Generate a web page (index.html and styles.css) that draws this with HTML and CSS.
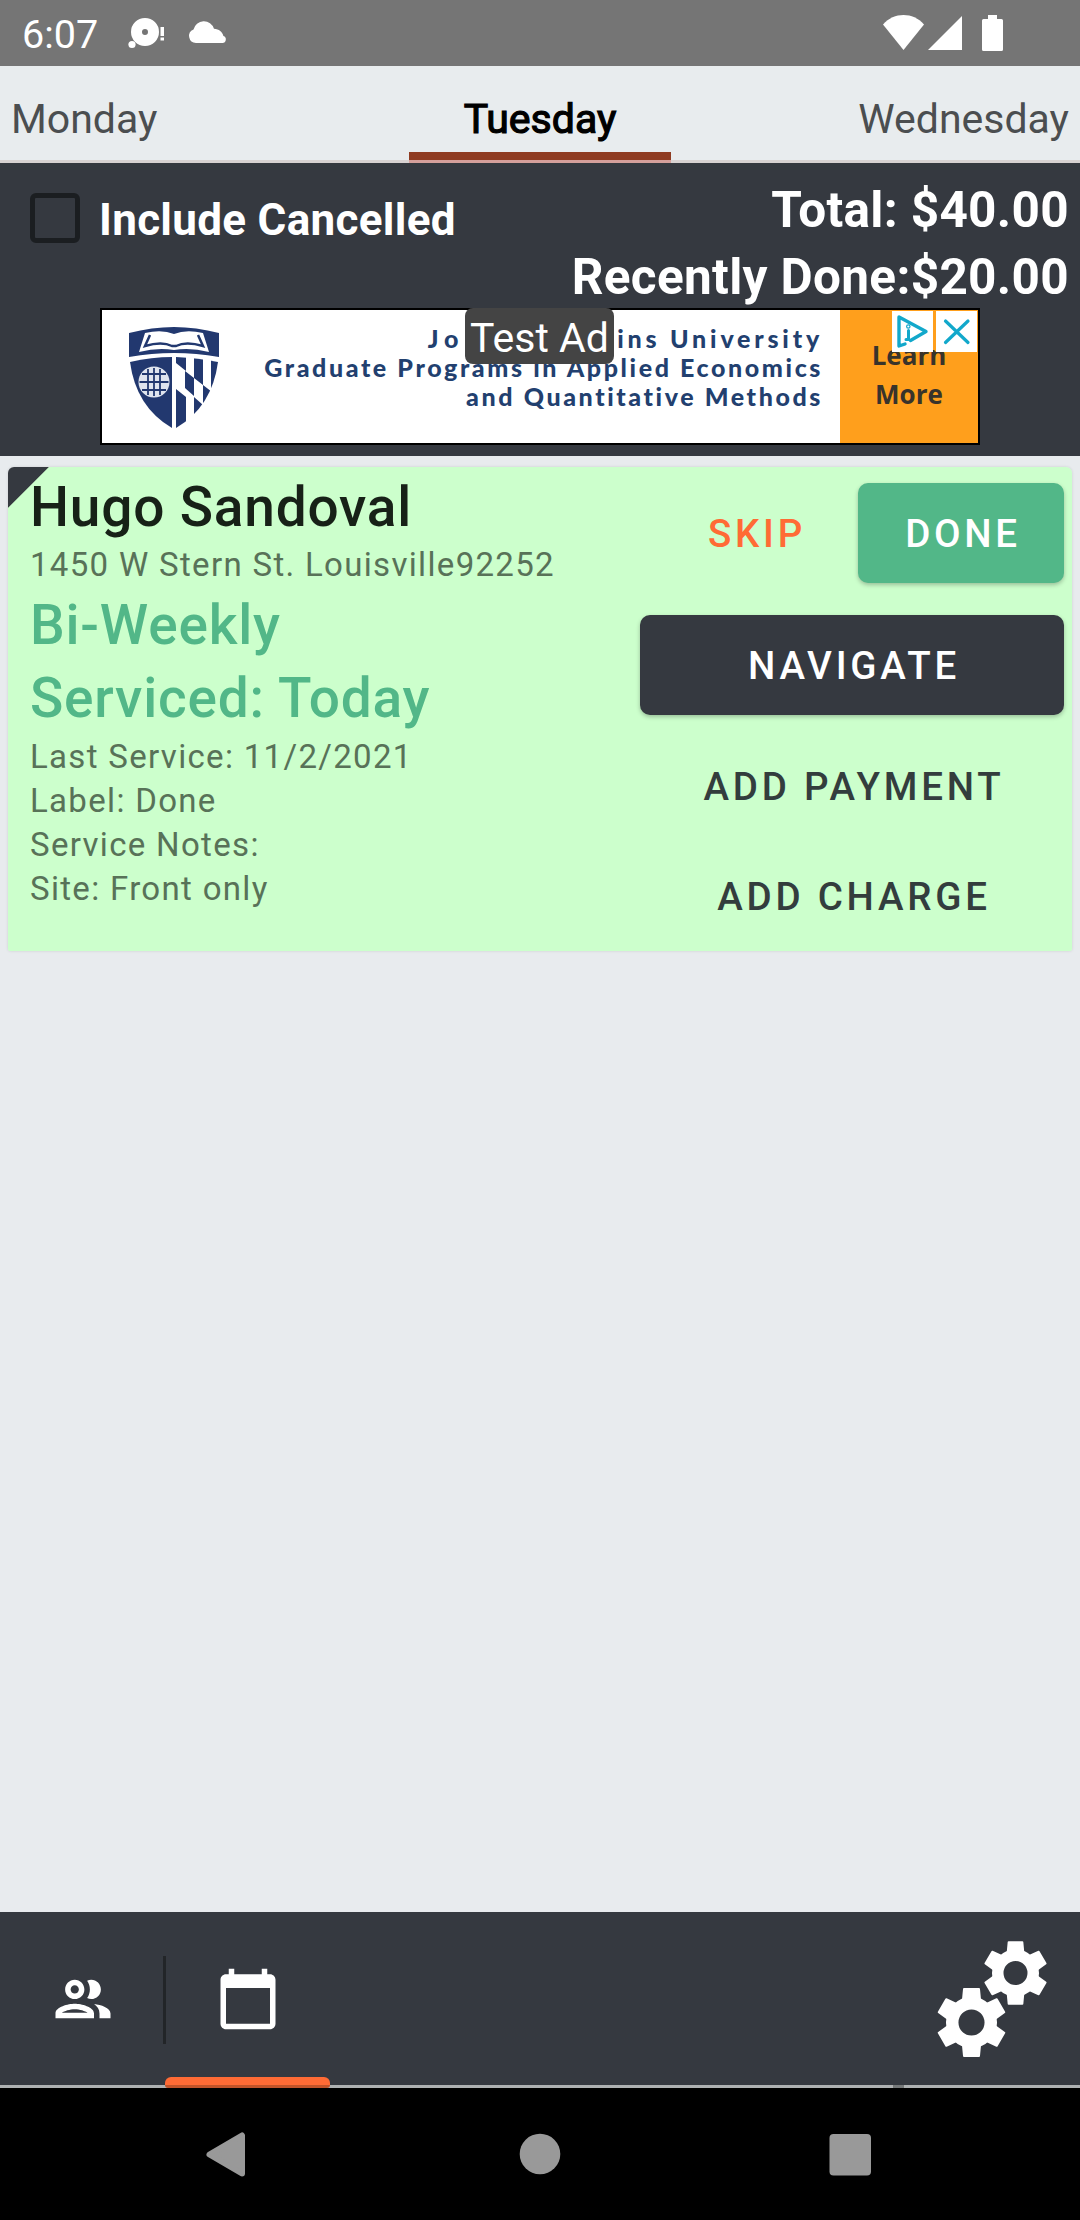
FILE: index.html
```html
<!DOCTYPE html>
<html lang="en">
<head>
<meta charset="utf-8">
<title>Schedule</title>
<link rel="stylesheet" href="styles.css">
</head>
<body>
<div class="screen">
  <header class="status">
    <span class="clock">6:07</span>
    <svg class="status-left" width="100" height="66" viewBox="128 0 100 66" fill="#fff">
      <path fill-rule="evenodd" d="M145 18a14 14 0 1 1 0 28a14 14 0 1 1 0-28zm0 11a3 3 0 1 0 0 6a3 3 0 1 0 0-6z"/>
      <circle cx="132" cy="44.5" r="3.6"/>
      <path d="M160.500 27h3.500v9h-3.500zM160.500 37.500h3.500v3h-3.500z"/>
      <path d="M196 43a7 7 0 0 1-2.500-13.500a10.600 10.600 0 0 1 20.500-.8c5 .3 8.500 3 9.400 7.300a3.600 3.600 0 0 1-1 7z"/>
    </svg>
    <svg class="status-right" width="124" height="66" viewBox="882 0 124 66" fill="#fff">
      <path d="M903.500 50L883 24.500c11-12.600 30-12.600 41 0z"/>
      <path d="M928 50L962 16v34z"/>
      <path d="M988 15h9v4h4.500a1.500 1.500 0 0 1 1.500 1.500v29a1.500 1.500 0 0 1-1.500 1.500h-18a1.500 1.500 0 0 1-1.500-1.500v-29a1.500 1.500 0 0 1 1.500-1.500h4.500z"/>
    </svg>
  </header>

  <nav class="days">
    <span class="day">Monday</span>
    <span class="day active">Tuesday</span>
    <span class="day last">Wednesday</span>
  </nav>
  <div class="days-edge"></div>

  <section class="summary">
    <div class="summary-top">
      <label class="include"><span class="box"></span><span>Include Cancelled</span></label>
      <div class="totals">
        <div>Total: $40.00</div>
        <div>Recently Done:$20.00</div>
      </div>
    </div>
    <div class="ad">
      <svg class="shield" width="92" height="102" viewBox="0 0 92 102">
        <path fill="#22386f" d="M1 6Q24 0 46 0Q68 0 91 6V30Q68 26 46 26Q24 26 1 30z"/>
        <path fill="#22386f" d="M2 35Q24 30 44 30V101Q8 80 2 35z"/>
        <path fill="#fff" d="M17 6Q34 2 46 7Q58 2 75 6L81 25Q62 20 46 23Q30 20 11 25z"/>
        <path fill="none" stroke="#22386f" stroke-width="2.500" d="M22 8L17 19Q34 14 44 19H48Q58 14 75 19L70 8"/>
        <circle cx="26" cy="55" r="15.500" fill="#dfe4ee"/>
        <path fill="none" stroke="#22386f" stroke-width="1.800" d="M14 47h24M11.500 55h29M14 63h24M20 42v26M26 41v28M32 42v26"/>
        <clipPath id="half"><path d="M48 30Q70 31 90 35Q84 80 48 101z"/></clipPath>
        <g clip-path="url(#half)" fill="#22386f">
          <path d="M48 28h10v16l-10-8zM66 28h9v30l-9-7zM83 28h9v42l-9-8z"/>
          <path d="M57 44l9 7v18l-9-8zM75 58l9 7v22l-9-8z"/>
          <path d="M48 62l10 8v35h-10zM66 70l9 8v22h-9z"/>
        </g>
      </svg>
      <div class="ad-copy">
        <div class="l1"><span class="wide">Johns Hopk</span>ins University</div>
        <div class="l2">Graduate Programs in Applied Economics</div>
        <div class="l3">and Quantitative Methods</div>
      </div>
      <div class="ad-cta"><span>Learn</span><span>More</span></div>
      <span class="test-ad">Test Ad</span>
      <div class="ad-choices">
        <svg width="41" height="41" viewBox="0 0 41 41" fill="none" stroke="#12a8cb" stroke-width="3.400" stroke-linecap="round" stroke-linejoin="round"><path d="M13 33L7 35V6L34 20.500L18.500 29.500"/><path d="M16.500 19.500v9h-2.500" stroke-width="3"/><circle cx="16.300" cy="15.500" r=".6"/></svg>
        <svg width="41" height="41" viewBox="0 0 41 41" fill="none" stroke="#12a8cb" stroke-width="3.200" stroke-linecap="round"><path d="M9.500 10L32 31.500M32 10L9.500 31.500"/></svg>
      </div>
    </div>
  </section>

  <main class="list">
    <article class="card">
      <div class="info">
        <div class="name">Hugo Sandoval</div>
        <div class="meta address">1450 W Stern St. Louisville92252</div>
        <div class="name green">Bi-Weekly</div>
        <div class="name green serviced">Serviced: Today</div>
        <div class="meta">Last Service: 11/2/2021</div>
        <div class="meta">Label: Done</div>
        <div class="meta">Service Notes:</div>
        <div class="meta">Site: Front only</div>
      </div>
      <div class="actions">
        <div class="pair">
          <button class="btn skip">SKIP</button>
          <button class="btn done">DONE</button>
        </div>
        <button class="btn navigate">NAVIGATE</button>
        <button class="btn text">ADD PAYMENT</button>
        <button class="btn text">ADD CHARGE</button>
      </div>
    </article>
  </main>

  <nav class="tabs">
    <div class="tab">
      <svg width="66" height="66" viewBox="0 0 24 24" fill="#fff"><path d="M9 13.750c-2.340 0-7 1.170-7 3.500V19h14v-1.750c0-2.330-4.660-3.500-7-3.500zM4.340 17c.84-.58 2.870-1.250 4.660-1.250s3.820.67 4.660 1.250H4.340zM9 12c1.930 0 3.500-1.570 3.500-3.500S10.930 5 9 5 5.500 6.570 5.500 8.500 7.070 12 9 12zm0-5c.83 0 1.500.67 1.500 1.500S9.830 10 9 10s-1.500-.67-1.500-1.500S8.170 7 9 7zm7.040 6.810c1.160.84 1.960 1.960 1.960 3.440V19h4v-1.750c0-2.020-3.500-3.170-5.960-3.440zM15 12c1.930 0 3.500-1.570 3.500-3.500S16.930 5 15 5c-.54 0-1.040.13-1.500.35.63.89 1 1.980 1 3.150s-.37 2.260-1 3.150c.46.22.96.35 1.500.35z"/></svg>
    </div>
    <div class="tab selected">
      <svg width="66" height="66" viewBox="0 0 24 24" fill="#fff"><path d="M20 3h-1V1h-2v2H7V1H5v2H4c-1.100 0-2 .9-2 2v16c0 1.100.9 2 2 2h16c1.100 0 2-.9 2-2V5c0-1.100-.9-2-2-2zm0 18H4V8h16v13z"/></svg>
    </div>
    <svg class="gears" width="112" height="120" viewBox="936 1940 112 120">
      <defs>
        <path id="tooth" fill="#fff" stroke="#fff" stroke-width="2" stroke-linejoin="round" d="M-8.500-23L-7.500-33.500H7.500L8.500-23z"/>
        <g id="gear">
          <circle r="19.300" fill="none" stroke="#fff" stroke-width="12.500"/>
          <use href="#tooth"/>
          <use href="#tooth" transform="rotate(60)"/>
          <use href="#tooth" transform="rotate(120)"/>
          <use href="#tooth" transform="rotate(180)"/>
          <use href="#tooth" transform="rotate(240)"/>
          <use href="#tooth" transform="rotate(300)"/>
        </g>
      </defs>
      <use href="#gear" transform="translate(971.500 2023.500)"/>
      <use href="#gear" transform="translate(1015.500 1974) scale(.92)"/>
    </svg>
  </nav>
  <div class="tabs-edge"><i class="edge-tab"></i><i class="edge-dot"></i></div>

  <footer class="sysnav">
    <svg width="1080" height="132" viewBox="0 2088 1080 132" fill="#999">
      <path stroke="#999" stroke-width="6" stroke-linejoin="round" d="M209.500 2154.500L242 2135.500V2173.500z"/>
      <circle cx="540" cy="2154" r="20.300"/>
      <rect x="829.500" y="2134" width="41.500" height="41.500" rx="4"/>
    </svg>
  </footer>
</div>
</body>
</html>
```
FILE: styles.css
```css
* { box-sizing: border-box; }

body {
  margin: 0;
  font-family: Roboto, "Liberation Sans", sans-serif;
  background: #e8ebee;
}

.screen {
  width: 1080px;
  height: 2220px;
  display: flex;
  flex-direction: column;
  overflow: hidden;
}

.status {
  height: 66px;
  background: #757575;
  color: #fff;
  display: flex;
  align-items: center;
  padding: 0 74px 0 22px;
}
.clock { font-size: 39.5px; width: 106px; padding-top: 3px; }
.status-right { margin-left: auto; }

.days {
  height: 94px;
  display: grid;
  grid-template-columns: 409px 262px 409px;
  font-size: 41px;
  line-height: 47px;
  color: #4b4e50;
  background: #e8ecee;
}
.day { padding: 30px 11px 0; }
.active {
  color: #000;
  text-align: center;
  border-bottom: 8px solid #8f3c22;
  -webkit-text-stroke: 1.2px #000;
}
.last { text-align: right; }
.days-edge {
  height: 3px;
  background: linear-gradient(90deg, #d8d2d2 409px, #d59f9b 409px 671px, #d8d2d2 671px);
}

.summary {
  height: 293px;
  background: #353940;
  color: #fff;
  font-weight: 700;
}
.summary-top {
  height: 145px;
  display: flex;
  justify-content: space-between;
  padding: 14px 11px 0 30px;
}
.include {
  display: flex;
  align-items: center;
  height: 86px;
  gap: 19px;
  font-size: 44px;
  letter-spacing: .3px;
}
.box {
  width: 50px;
  height: 50px;
  border: 5px solid #1b1e21;
  border-radius: 6px;
  margin-top: -5px;
}
.totals { font-size: 49.5px; line-height: 67px; letter-spacing: .33px; text-align: right; }

.ad {
  position: relative;
  width: 880px;
  height: 137px;
  margin: 0 auto;
  border: 2px solid #000;
  background: #fff;
  display: flex;
}
.shield { margin: 17px 0 0 26px; flex: none; }
.ad-copy {
  flex: 1;
  padding: 13px 17px 0 0;
  text-align: right;
  white-space: nowrap;
  font-family: Lato, "Open Sans", sans-serif;
  font-weight: 900;
  font-size: 25px;
  line-height: 29px;
  color: #22406f;
}
.l1 { letter-spacing: 3.8px; line-height: 30px; }
.wide { letter-spacing: 5.8px; }
.l2 { letter-spacing: 2.6px; }
.l3 { letter-spacing: 2.6px; line-height: 28px; }
.ad-cta {
  flex: none;
  width: 138px;
  background: #ff9f1c;
  color: #38332b;
  font-family: "Open Sans", "Noto Sans", sans-serif;
  font-size: 26px;
  line-height: 39px;
  display: flex;
  flex-direction: column;
  align-items: center;
  padding-top: 26px;
}
.test-ad {
  position: absolute;
  left: 363px;
  top: -2px;
  width: 149px;
  height: 56px;
  border-radius: 8px;
  background: #444;
  font-size: 41px;
  font-weight: 400;
  line-height: 60px;
  text-align: center;
}
.ad-choices {
  position: absolute;
  right: 1px;
  top: 1px;
  display: flex;
  gap: 3px;
}
.ad-choices svg { background: #fff; }

.list { flex: 1; padding: 11px 8px; }
.card {
  height: 484px;
  display: flex;
  justify-content: space-between;
  border-radius: 6px 6px 2px 2px;
  padding: 4px 8px 0 22px;
  background: linear-gradient(135deg, #353940 28.6px, #cfc 29.2px);
  box-shadow: 0 0 3px rgba(0, 0, 0, .12);
}
.info { width: 534px; white-space: nowrap; }
.name {
  font-size: 55px;
  font-weight: 500;
  letter-spacing: .8px;
  line-height: 73px;
  color: #172117;
}
.green { color: #52b788; line-height: 74px; }
.serviced { line-height: 73px; }
.meta {
  font-size: 33px;
  letter-spacing: 1.32px;
  line-height: 44px;
  color: #587258;
}
.address { margin: -1px 0 1px; }

.actions {
  flex: none;
  width: 424px;
  display: flex;
  flex-direction: column;
  padding-top: 12px;
}
.pair { display: flex; justify-content: flex-end; gap: 8px; }
.btn {
  flex: none;
  border: 0;
  height: 100px;
  padding: 1px 0 0 4px;
  border-radius: 10px;
  background: none;
  font-family: inherit;
  font-size: 38.5px;
  font-weight: 500;
  letter-spacing: 3.75px;
  color: #fff;
}
.skip { width: 193px; padding-left: 7px; color: #ff6b35; }
.done { width: 206px; background: #52b788; box-shadow: 0 2px 4px rgba(0, 0, 0, .25); }
.navigate { margin: 32px 0 21px; background: #353940; box-shadow: 0 2px 4px rgba(0, 0, 0, .25); }
.text { color: #333d3d; margin-bottom: 10px; }

.tabs {
  height: 173px;
  display: flex;
  align-items: center;
  background: #353940;
}
.tab {
  position: relative;
  width: 165px;
  height: 100%;
  display: grid;
  place-items: center;
}
.tab:first-child::after {
  content: "";
  position: absolute;
  right: -1px;
  top: 44px;
  width: 3px;
  height: 88px;
  background: #222528;
}
.selected::after {
  content: "";
  position: absolute;
  inset: auto 0 0 0;
  height: 8px;
  border-radius: 6px 6px 0 0;
  background: #ff6b35;
}
.gears { margin-left: auto; margin-right: 32px; }
.tabs-edge {
  height: 3px;
  display: flex;
  gap: 563px;
  padding-left: 165px;
  background: #aeb1b2;
}
.edge-tab { width: 165px; background: #c15329; border-radius: 0 0 5px 5px; }
.edge-dot { width: 11px; background: #757879; }

.sysnav { height: 132px; background: #000; }
.sysnav svg { display: block; }
```
